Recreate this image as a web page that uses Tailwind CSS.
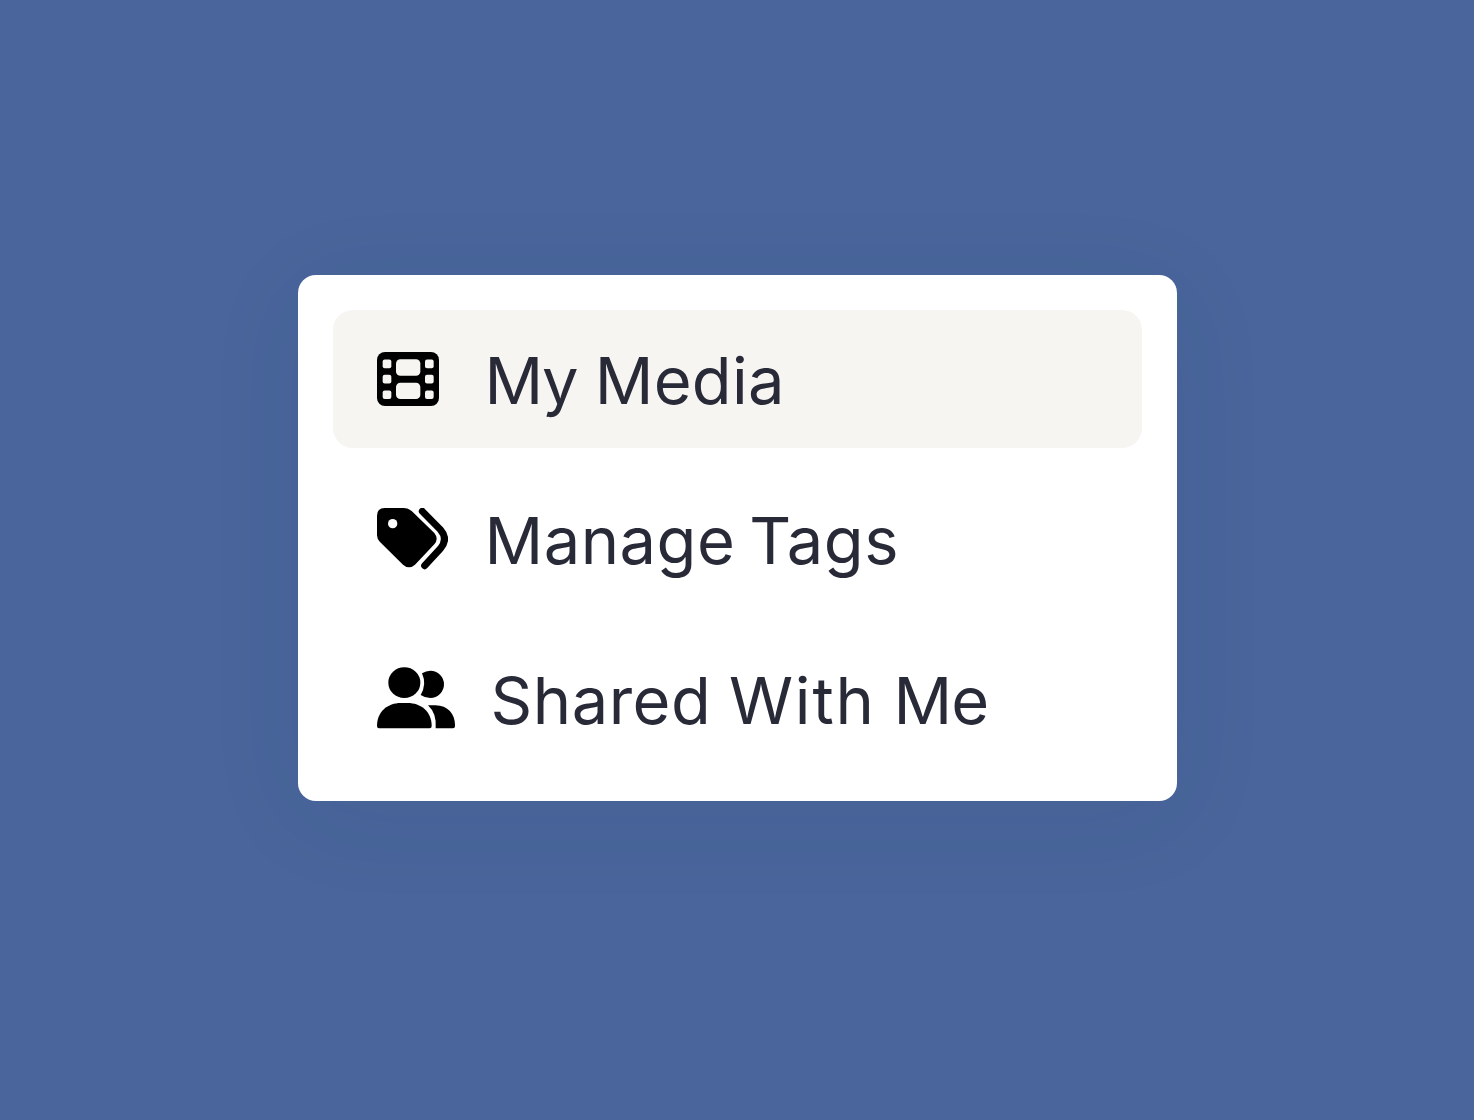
<!DOCTYPE html>
<html lang="en">
<head>
    <meta charset="UTF-8">
    <meta name="viewport" content="width=device-width, initial-scale=1.0">
    <title>My Media</title>
    <script src="https://cdn.jsdelivr.net/npm/@tailwindcss/browser@4"></script>
</head>
<body class="bg-[#49659b] font-['Inter',sans-serif] h-screen overflow-hidden flex justify-center items-start pt-[275px]">
    <!-- Menu -->
    <nav class="w-[879px] h-[526px] bg-white rounded-[18px] p-[35px] shadow-[0_16px_100px_rgba(40,60,100,0.07)]">
        <ul class="flex flex-col gap-[22px] text-[65px] leading-[138px] text-[#292a38] whitespace-nowrap">
            <li class="flex items-center h-[138px] rounded-[20px] bg-[#f6f5f1] pl-[44px]">
                <svg class="w-[62px] h-[54px] mr-[46px] shrink-0" viewBox="51 49 186 163" preserveAspectRatio="none">
                    <rect x="51" y="49" width="186" height="163" rx="24"/>
                    <g fill="#f6f5f1">
                        <rect x="68" y="72" width="26" height="26" rx="6"/>
                        <rect x="68" y="118" width="26" height="26" rx="6"/>
                        <rect x="68" y="165" width="26" height="26" rx="6"/>
                        <rect x="195" y="72" width="26" height="26" rx="6"/>
                        <rect x="195" y="118" width="26" height="26" rx="6"/>
                        <rect x="195" y="165" width="26" height="26" rx="6"/>
                        <rect x="108" y="71" width="73" height="50" rx="13"/>
                        <rect x="108" y="142" width="73" height="49" rx="13"/>
                    </g>
                </svg>
                <a href="#" class="pt-[4px] tracking-[0.3px] [word-spacing:-1px]"><span class="tracking-[-1.5px]">My</span> Media</a>
            </li>
            <li class="flex items-center h-[138px] rounded-[20px] pl-[44px]">
                <svg class="w-[71px] h-[62px] mr-[37px] shrink-0" viewBox="51 37 213 186">
                    <path d="M74 37H131Q145 37 155 46L223 112Q237 129 223 146L165 207Q147 223 129 207L60 139Q51 131 51 119V60Q51 37 74 37Z"/>
                    <circle cx="98" cy="84" r="14" fill="#fff"/>
                    <path d="M187 47L241 102Q266 130 241 159L194 210" fill="none" stroke="#000" stroke-width="21" stroke-linecap="round"/>
                </svg>
                <a href="#" class="pt-[4px] tracking-[0.5px] [word-spacing:-5px]">Manage Tags</a>
            </li>
            <li class="flex items-center h-[138px] rounded-[20px] pl-[44px]">
                <svg class="w-[78px] h-[62px] mr-[36px] shrink-0 overflow-visible" viewBox="51 38 234 186">
                    <ellipse cx="133" cy="82" rx="48" ry="46"/>
                    <path d="M186 54Q198 46 211 46A41 41 0 0 1 211 128Q195 128 182 119Q201 87 186 54Z"/>
                    <path d="M57 219Q51 219 51 212C51 168 84 143 122 143H143C182 143 215 168 215 212Q215 219 209 219Z"/>
                    <path d="M204 150H226C264 150 285 178 285 207V213Q285 219 279 219H227Q231 175 204 150Z"/>
                </svg>
                <a href="#" class="pt-[4px] tracking-[0.5px] [word-spacing:-1px]">Shared <span class="tracking-[1.8px]">With</span> <span class="tracking-[-1px]">Me</span></a>
            </li>
        </ul>
    </nav>
</body>
</html>
